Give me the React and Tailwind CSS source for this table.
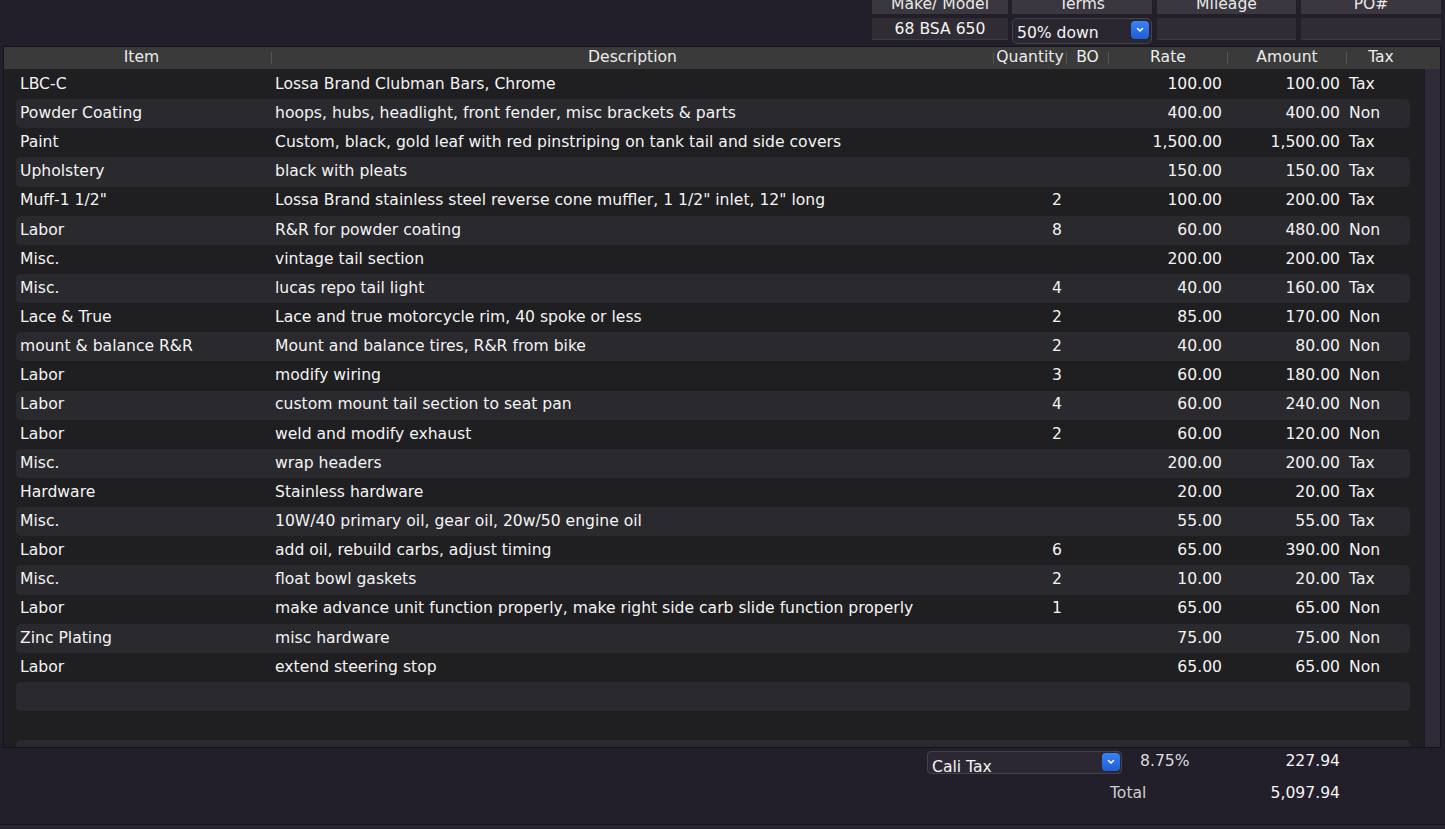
import React from 'react';

const rows = [
  ['LBC-C', 'Lossa Brand Clubman Bars, Chrome', '', '100.00', '100.00', 'Tax'],
  ['Powder Coating', 'hoops, hubs, headlight, front fender, misc brackets & parts', '', '400.00', '400.00', 'Non'],
  ['Paint', 'Custom, black, gold leaf with red pinstriping on tank tail and side covers', '', '1,500.00', '1,500.00', 'Tax'],
  ['Upholstery', 'black with pleats', '', '150.00', '150.00', 'Tax'],
  ['Muff-1 1/2"', 'Lossa Brand stainless steel reverse cone muffler, 1 1/2" inlet, 12" long', '2', '100.00', '200.00', 'Tax'],
  ['Labor', 'R&R for powder coating', '8', '60.00', '480.00', 'Non'],
  ['Misc.', 'vintage tail section', '', '200.00', '200.00', 'Tax'],
  ['Misc.', 'lucas repo tail light', '4', '40.00', '160.00', 'Tax'],
  ['Lace & True', 'Lace and true motorcycle rim, 40 spoke or less', '2', '85.00', '170.00', 'Non'],
  ['mount & balance R&R', 'Mount and balance tires, R&R from bike', '2', '40.00', '80.00', 'Non'],
  ['Labor', 'modify wiring', '3', '60.00', '180.00', 'Non'],
  ['Labor', 'custom mount tail section to seat pan', '4', '60.00', '240.00', 'Non'],
  ['Labor', 'weld and modify exhaust', '2', '60.00', '120.00', 'Non'],
  ['Misc.', 'wrap headers', '', '200.00', '200.00', 'Tax'],
  ['Hardware', 'Stainless hardware', '', '20.00', '20.00', 'Tax'],
  ['Misc.', '10W/40 primary oil, gear oil, 20w/50 engine oil', '', '55.00', '55.00', 'Tax'],
  ['Labor', 'add oil, rebuild carbs, adjust timing', '6', '65.00', '390.00', 'Non'],
  ['Misc.', 'float bowl gaskets', '2', '10.00', '20.00', 'Tax'],
  ['Labor', 'make advance unit function properly, make right side carb slide function properly', '1', '65.00', '65.00', 'Non'],
  ['Zinc Plating', 'misc hardware', '', '75.00', '75.00', 'Non'],
  ['Labor', 'extend steering stop', '', '65.00', '65.00', 'Non'],
];

const font = { fontFamily: '"DejaVu Sans", Verdana, sans-serif' };

const BlueButton = () => (
  <div className="w-[18px] h-[18px] rounded-[4px] bg-gradient-to-b from-[#3b82f6] to-[#1d5fd6] flex items-center justify-center">
    <svg width="8" height="6" viewBox="0 0 8 6" fill="none">
      <path d="M1.5 1.5 L4 4 L6.5 1.5" stroke="white" strokeWidth="1.5" strokeLinecap="round" strokeLinejoin="round" />
    </svg>
  </div>
);

const Label = ({ text, w }) => (
  <div className={`${w} h-[14px] bg-[#3a373e] overflow-hidden text-center text-[#e8e8e8]`}>
    <div className="leading-[18px] -mt-[5px]">{text}</div>
  </div>
);

const Sep = () => <div className="w-px h-[12px] bg-[#555458]" />;

const App = () => {
  return (
    <div className="w-[1445px] h-[829px] bg-[#221e2a] text-[15.6px] text-[#f4f4f4] overflow-hidden flex flex-col" style={font}>
      {/* Top fields */}
      <div className="flex justify-end pr-[4px] gap-[4px]">
        <div className="flex flex-col gap-[4px]">
          <Label text="Make/ Model" w="w-[136px]" />
          <div className="w-[136px] h-[22px] bg-[#2f2c34] border-b border-[#3d3a42] text-center leading-[22px]">68 BSA 650</div>
        </div>
        <div className="flex flex-col gap-[4px]">
          <Label text="Terms" w="w-[140px]" />
          <div className="w-[140px] h-[26px] rounded-[5px] bg-[#2a2630] border border-[#45414c] flex items-start justify-between pl-[4px] pr-[2px] pt-[2px]">
            <span className="leading-[25px]">50% down</span>
            <BlueButton />
          </div>
        </div>
        <div className="flex flex-col gap-[4px] ml-[1px]">
          <Label text="Mileage" w="w-[139px]" />
          <div className="w-[139px] h-[22px] bg-[#2f2c34] border-b border-[#3d3a42]" />
        </div>
        <div className="flex flex-col gap-[4px] ml-[1px]">
          <Label text="PO#" w="w-[140px]" />
          <div className="w-[140px] h-[22px] bg-[#2f2c34] border-b border-[#3d3a42]" />
        </div>
      </div>

      {/* Table panel */}
      <div className="ml-[3px] mr-[4px] mt-[2px] h-[702px] border border-[#141317] bg-[#1f1e21] flex flex-col overflow-hidden">
        <div className="h-[22px] bg-[#3a3a3a] flex items-center text-[#ececec] shrink-0">
          <div className="w-[267px] pl-[8px] text-center">Item</div>
          <Sep />
          <div className="w-[721px] text-center">Description</div>
          <Sep />
          <div className="w-[72px] text-center">Quantity</div>
          <Sep />
          <div className="w-[41px] text-center">BO</div>
          <Sep />
          <div className="w-[118px] text-center">Rate</div>
          <Sep />
          <div className="w-[118px] text-center">Amount</div>
          <Sep />
          <div className="w-[68px] text-center">Tax</div>
        </div>
        <div className="flex flex-1 min-h-0">
          <div className="flex-1 pl-[12px] pr-[14px] pt-[1px] overflow-hidden">
            {rows.concat([null, null, null]).map((r, i) => (
              <div
                key={i}
                className={`h-[29.15px] flex items-center rounded-[5px] ${i % 2 === 1 ? 'bg-[#2a292d]' : ''}`}
              >
                <div className="w-[255px] pl-[4px] whitespace-nowrap">{r && r[0]}</div>
                <div className="w-[722px] pl-[4px] whitespace-nowrap">{r && r[1]}</div>
                <div className="w-[73px] pr-[4px] text-right">{r && r[2]}</div>
                <div className="w-[42px]" />
                <div className="w-[119px] pr-[5px] text-right">{r && r[3]}</div>
                <div className="w-[119px] pr-[6px] text-right">{r && r[4]}</div>
                <div className="flex-1 pl-[3px]">{r && r[5]}</div>
              </div>
            ))}
          </div>
          <div className="w-[16px] bg-[#2e2a37] border-l border-[#1a181d]" />
        </div>
      </div>

      {/* Totals */}
      <div className="flex-1 flex flex-col pr-[105px] pt-[3px]">
        <div className="flex justify-end items-start">
          <div className="w-[195px] h-[23px] rounded-[4px] bg-[#2c2833] border border-[#46424c] flex items-start justify-between pl-[4px] pr-[1px] pt-[1px]">
            <span className="leading-[28px]">Cali Tax</span>
            <BlueButton />
          </div>
          <div className="w-[218px] flex justify-between pl-[18px] leading-[20px]">
            <span className="text-[#dcdcdc]">8.75%</span>
            <span>227.94</span>
          </div>
        </div>
        <div className="flex justify-end mt-[9px]">
          <div className="w-[230px] flex justify-between leading-[20px]">
            <span className="text-[#cfcfcf]">Total</span>
            <span>5,097.94</span>
          </div>
        </div>
      </div>
      <div className="h-[5px] border-t border-[#17151b] bg-[#29252f]" />
    </div>
  );
};

export default App;
